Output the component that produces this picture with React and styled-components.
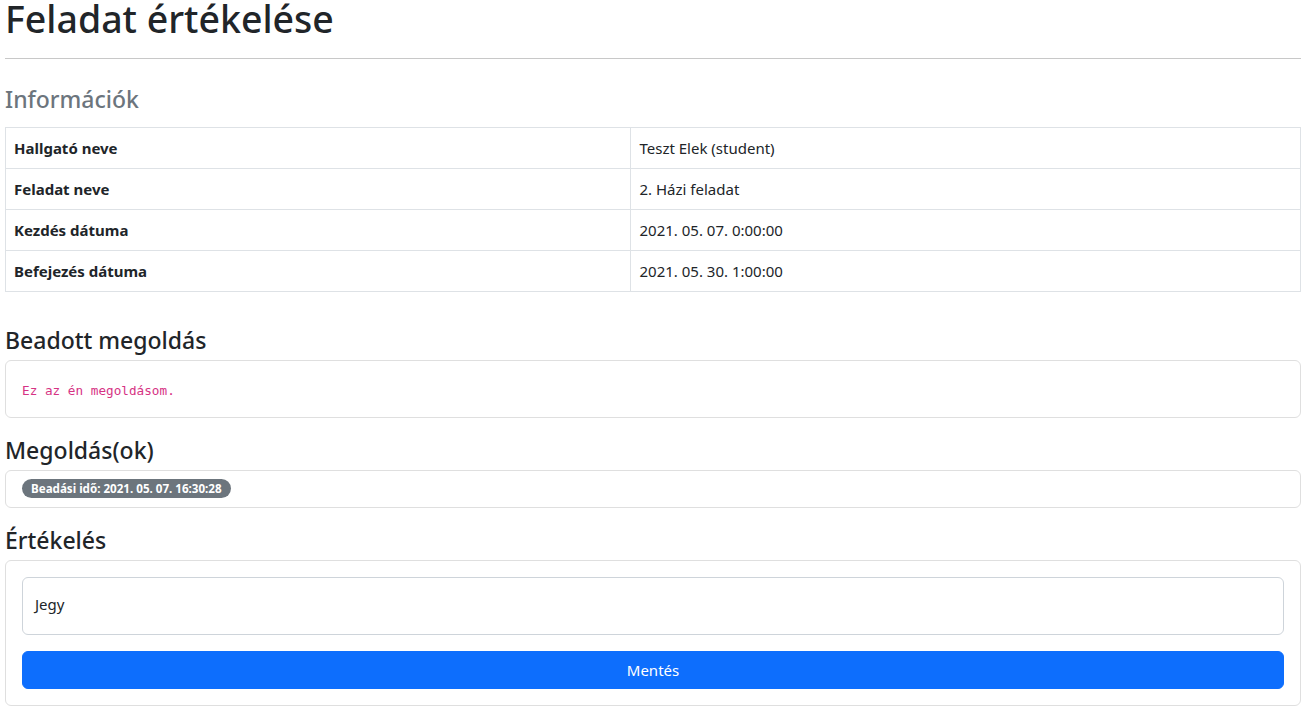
import React from "react";
import styled, { createGlobalStyle } from "styled-components";

const Global = createGlobalStyle`
  html, body { margin: 0; padding: 0; background: #fff; }
  body {
    font-family: "Noto Sans", "Open Sans", sans-serif;
    font-size: 16px;
    line-height: 1.5;
    color: #212529;
  }
  * { box-sizing: border-box; }
`;

const Page = styled.div`
  padding: 0 5px 2px;
`;

const Title = styled.h1`
  margin: 0;
  font-size: 37.5px;
  font-weight: 500;
  line-height: 38px;
`;

const Rule = styled.hr`
  margin: 20px 0 26px;
  border: 0;
  border-top: 1px solid #c8c8c8;
`;

const Heading = styled.h4`
  margin: ${(p) => p.$mt || 0}px 0 ${(p) => p.$mb || 6}px;
  font-size: 23px;
  font-weight: 500;
  line-height: 28px;
  color: ${(p) => (p.$muted ? "#6c757d" : "#212529")};
`;

const Table = styled.table`
  width: 100%;
  border-collapse: collapse;
  margin: 0;
  font-size: 15px;
`;

const Cell = styled.td`
  border: 1px solid #dee2e6;
  padding: 8px 8px;
  height: 41px;
  width: ${(p) => p.$w || "auto"};
  font-weight: ${(p) => (p.$bold ? 700 : 400)};
  vertical-align: middle;
`;

const Card = styled.div`
  border: 1px solid #dfdfdf;
  border-radius: 6px;
  padding: ${(p) => p.$pad || "16px"};
  display: ${(p) => (p.$flex ? "flex" : "block")};
  align-items: center;
`;

const Code = styled.code`
  display: block;
  padding: 4px 0 1px;
  font-family: "DejaVu Sans Mono", "Liberation Mono", monospace;
  font-size: 12.7px;
  line-height: 19px;
  color: #d63384;
`;

const Badge = styled.span`
  display: inline-block;
  height: 19px;
  padding: 0 9px;
  font-size: 11.6px;
  font-weight: 700;
  line-height: 19px;
  color: #fff;
  background: #6c757d;
  border-radius: 50rem;
  white-space: nowrap;
`;

const Floating = styled.div`
  position: relative;
  margin-bottom: 16px;
`;

const Input = styled.input`
  display: block;
  width: 100%;
  height: 58px;
  padding: 16px 12px;
  border: 1px solid #ced4da;
  border-radius: 6px;
  font: inherit;
  outline: none;
`;

const FloatLabel = styled.label`
  position: absolute;
  left: 13px;
  top: 16px;
  font-size: 15px;
  line-height: 1.5;
  color: #212529;
  pointer-events: none;
`;

const Button = styled.button`
  display: block;
  width: 100%;
  height: 38px;
  border: 1px solid #0d6efd;
  border-radius: 6px;
  background: #0d6efd;
  color: #fff;
  font-family: inherit;
  font-size: 15px;
  cursor: pointer;
`;

const rows = [
  ["Hallgató neve", "Teszt Elek (student)"],
  ["Feladat neve", "2. Házi feladat"],
  ["Kezdés dátuma", "2021. 05. 07. 0:00:00"],
  ["Befejezés dátuma", "2021. 05. 30. 1:00:00"],
];

export default function App() {
  return (
    <Page>
      <Global />
      <Title>Feladat értékelése</Title>
      <Rule />
      <Heading $muted $mb={14}>Információk</Heading>
      <Table>
        <tbody>
          {rows.map(([k, v]) => (
            <tr key={k}>
              <Cell $bold $w="48.3%">{k}</Cell>
              <Cell>{v}</Cell>
            </tr>
          ))}
        </tbody>
      </Table>
      <Heading $mt={34}>Beadott megoldás</Heading>
      <Card>
        <Code>Ez az én megoldásom.</Code>
      </Card>
      <Heading $mt={18}>Megoldás(ok)</Heading>
      <Card $pad="8px 16px 9px" $flex>
        <Badge>Beadási idő: 2021. 05. 07. 16:30:28</Badge>
      </Card>
      <Heading $mt={18}>Értékelés</Heading>
      <Card>
        <Floating>
          <Input id="jegy" />
          <FloatLabel htmlFor="jegy">Jegy</FloatLabel>
        </Floating>
        <Button>Mentés</Button>
      </Card>
    </Page>
  );
}
